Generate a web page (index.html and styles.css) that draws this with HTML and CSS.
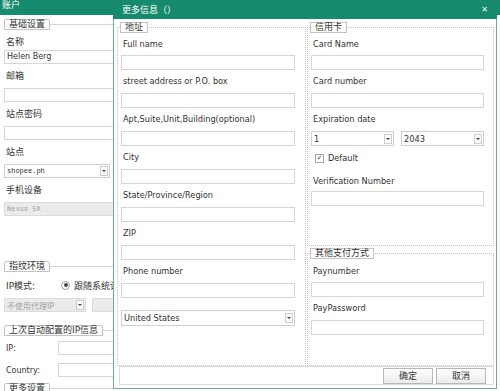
FILE: index.html
```html
<!DOCTYPE html>
<html lang="zh-CN">
<head>
  <meta charset="UTF-8">
  <meta name="viewport" content="width=device-width, initial-scale=1.0">
  <title>账户</title>
  <link rel="stylesheet" href="styles.css">
</head>
<body>
  <div class="app">
    <div class="app-bar">账户</div>

    <div class="app-body">
      <div class="group"><span class="group-name">基础设置</span></div>
      <div class="field-label first">名称</div>
      <div class="input">Helen Berg</div>
      <div class="field-label">邮箱</div>
      <div class="input"></div>
      <div class="field-label">站点密码</div>
      <div class="input"></div>
      <div class="field-label">站点</div>
      <div class="select site mono"><span>shopee.ph</span><i class="arrow"></i></div>
      <div class="field-label">手机设备</div>
      <div class="input disabled mono">Nexus 5X</div>

      <div class="group env"><span class="group-name">指纹环境</span></div>
      <div class="ip-mode">
        <span class="row-label">IP模式:</span>
        <span class="radio"></span>
        <span class="radio-text">跟随系统设置</span>
      </div>
      <div class="proxy-row">
        <div class="select disabled proxy"><span>不使用代理IP</span><i class="arrow"></i></div>
        <div class="input disabled proxy-extra"></div>
      </div>

      <div class="group last-ip"><span class="group-name">上次自动配置的IP信息</span></div>
      <div class="info-row ip">
        <span class="row-label">IP:</span>
        <div class="input"></div>
      </div>
      <div class="info-row country">
        <span class="row-label">Country:</span>
        <div class="input"></div>
      </div>

      <div class="group more"><span class="group-name">更多设置</span></div>
    </div>

    <div class="dialog">
      <div class="dialog-head">
        <span>更多信息（）</span>
        <span class="close">✕</span>
      </div>

      <div class="dialog-body">
        <div class="columns">
          <fieldset class="box address">
            <legend>地址</legend>
            <label class="lbl">Full name</label>
            <div class="input"></div>
            <label class="lbl">street address or P.O. box</label>
            <div class="input"></div>
            <label class="lbl">Apt,Suite,Unit,Building(optional)</label>
            <div class="input"></div>
            <label class="lbl">City</label>
            <div class="input"></div>
            <label class="lbl">State/Province/Region</label>
            <div class="input"></div>
            <label class="lbl">ZIP</label>
            <div class="input"></div>
            <label class="lbl">Phone number</label>
            <div class="input"></div>
            <div class="select country-select"><span>United States</span><i class="arrow"></i></div>
          </fieldset>

          <div class="side">
            <fieldset class="box card">
              <legend>信用卡</legend>
              <label class="lbl">Card Name</label>
              <div class="input"></div>
              <label class="lbl">Card number</label>
              <div class="input"></div>
              <label class="lbl">Expiration date</label>
              <div class="expiry">
                <div class="select"><span>1</span><i class="arrow"></i></div>
                <div class="select"><span>2043</span><i class="arrow"></i></div>
              </div>
              <div class="check-row"><span class="checkbox">✓</span>Default</div>
              <label class="lbl short">Verification Number</label>
              <div class="input"></div>
            </fieldset>

            <fieldset class="box other">
              <legend>其他支付方式</legend>
              <label class="lbl">Paynumber</label>
              <div class="input"></div>
              <label class="lbl">PayPassword</label>
              <div class="input"></div>
            </fieldset>
          </div>
        </div>

        <div class="dialog-foot">
          <button>确定</button>
          <button>取消</button>
        </div>
      </div>
    </div>
  </div>
</body>
</html>
```

FILE: styles.css
```css
* {
  box-sizing: border-box;
}

body {
  margin: 0;
  font-family: "DejaVu Sans", "Noto Sans CJK SC", sans-serif;
  font-size: 8px;
  color: #333;
  background: #fff;
}

.app {
  position: relative;
  width: 500px;
  height: 391px;
  overflow: hidden;
  background: #fff;
}

.app-bar {
  height: 15px;
  background-color: #168a6c;
  color: #fff;
  font-size: 9px;
  line-height: 11px;
  padding-left: 2px;
}

.app-body {
  width: 180px;
  padding: 4px 0 0 4px;
}

.mono {
  font-family: "Liberation Mono", "Noto Sans CJK SC", monospace;
  font-size: 7px;
}

/* section titles of the back window */
.group {
  display: flex;
  align-items: center;
  height: 11px;
}

.group::after {
  content: "";
  flex: 1;
  border-top: 1px solid #d4d4d4;
}

.group-name {
  height: 11px;
  padding: 0 4px;
  border: 1px solid #c4c4c4;
  border-radius: 2px 2px 0 0;
  font-size: 9px;
  line-height: 9px;
  background: #fff;
  white-space: nowrap;
}

.group.env {
  margin-top: 45px;
}

.group.last-ip {
  margin-top: 13px;
}

.group.more {
  margin-top: 6px;
}

.field-label {
  height: 24px;
  line-height: 24px;
  padding-left: 2px;
  font-size: 9px;
}

.field-label.first {
  height: 20px;
}

.input {
  height: 14px;
  border: 1px solid #d6d6d6;
  background: #fff;
  line-height: 12px;
  padding-left: 2px;
  white-space: nowrap;
}

.app-body .input {
  width: 160px;
}

.input.disabled,
.select.disabled {
  background: #ebebeb;
  border-color: #dcdcdc;
  color: #a0a0a0;
}

.select {
  display: flex;
  align-items: center;
  justify-content: space-between;
  height: 14px;
  padding: 0 1px 0 2px;
  border: 1px solid #d0d0d0;
  background: #fff;
  white-space: nowrap;
}

.select.site {
  width: 106px;
}

.arrow {
  display: flex;
  align-items: center;
  justify-content: center;
  width: 8px;
  height: 10px;
  border: 1px solid #cfcfcf;
  background: #fafafa;
}

.arrow::after {
  content: "";
  border-top: 2px solid #444;
  border-left: 2px solid transparent;
  border-right: 2px solid transparent;
}

.ip-mode {
  display: flex;
  align-items: center;
  height: 26px;
  font-size: 9px;
}

.row-label {
  padding-left: 2px;
}

.ip-mode .row-label {
  width: 57px;
}

.radio {
  display: flex;
  align-items: center;
  justify-content: center;
  width: 9px;
  height: 9px;
  border: 1px solid #9a9a9a;
  border-radius: 50%;
  background: #fff;
}

.radio::after {
  content: "";
  width: 4px;
  height: 4px;
  border-radius: 50%;
  background: #444;
}

.radio-text {
  margin-left: 4px;
  white-space: nowrap;
}

.proxy-row {
  display: flex;
  gap: 6px;
}

.select.proxy {
  width: 82px;
  font-size: 8px;
}

.app-body .input.proxy-extra {
  width: 70px;
}

.info-row {
  display: flex;
  align-items: center;
  height: 14px;
  margin-top: 5px;
}

.info-row.country {
  margin-top: 8px;
}

.info-row .row-label {
  width: 54px;
}

.app-body .info-row .input {
  width: 100px;
}

/* dialog over the account window */
.dialog {
  position: absolute;
  left: 113px;
  top: 0;
  width: 384px;
  height: 389px;
  display: flex;
  flex-direction: column;
  border: 1px solid #6aae9a;
  border-top: none;
  background: #fff;
}

.dialog-head {
  display: flex;
  align-items: center;
  justify-content: space-between;
  height: 19px;
  margin: 0 -1px;
  padding: 0 9px;
  background-color: #168a6c;
  color: #fff;
  font-size: 9px;
}

.close {
  font-size: 8px;
  font-weight: bold;
}

.dialog-body {
  flex: 1;
  display: flex;
  flex-direction: column;
  padding: 3px 2px 3px 3px;
}

.columns {
  flex: 1;
  display: flex;
  gap: 1px;
}

.box {
  margin: 0;
  padding: 0 10px 0 3px;
  min-width: 0;
  border: 1px dotted #c4c4c4;
}

.box legend {
  height: 11px;
  margin-left: -1px;
  padding: 0 4px;
  border: 1px solid #c4c4c4;
  font-size: 9px;
  line-height: 9px;
  background: #fff;
}

.box legend + .lbl {
  height: 22px;
}

.address {
  width: 189px;
}

.side {
  flex: 1;
  display: flex;
  flex-direction: column;
  gap: 2px;
}

.card {
  height: 224px;
  padding-right: 9px;
}

.other {
  flex: 1;
  padding-right: 9px;
  padding-top: 1px;
}

.lbl {
  display: block;
  height: 23px;
  line-height: 23px;
  padding-left: 2px;
  font-size: 8.2px;
  white-space: nowrap;
}

.lbl.short {
  height: 21px;
}

.box .input {
  height: 15px;
}

.select.country-select {
  height: 16px;
  margin-top: 12px;
  font-size: 8.2px;
}

.expiry {
  display: flex;
  gap: 7px;
}

.expiry .select {
  flex: 1;
  height: 15px;
  font-size: 8.2px;
}

.check-row {
  display: flex;
  align-items: center;
  height: 24px;
  padding-left: 4px;
  font-size: 8.2px;
}

.checkbox {
  display: flex;
  align-items: center;
  justify-content: center;
  width: 9px;
  height: 9px;
  margin-right: 4px;
  border: 1px solid #a8a8a8;
  font-size: 7px;
  line-height: 7px;
  color: #444;
}

.dialog-foot {
  display: flex;
  align-items: center;
  justify-content: flex-end;
  gap: 3px;
  height: 19px;
  margin-left: 2px;
  padding-right: 7px;
  border: 1px solid #dadada;
}

button {
  width: 50px;
  height: 16px;
  padding: 0;
  border: 1px solid #b8b8b8;
  background: linear-gradient(#fdfdfd, #ececec);
  font-family: "Noto Sans CJK SC", sans-serif;
  font-size: 9px;
  color: #333;
}
```
